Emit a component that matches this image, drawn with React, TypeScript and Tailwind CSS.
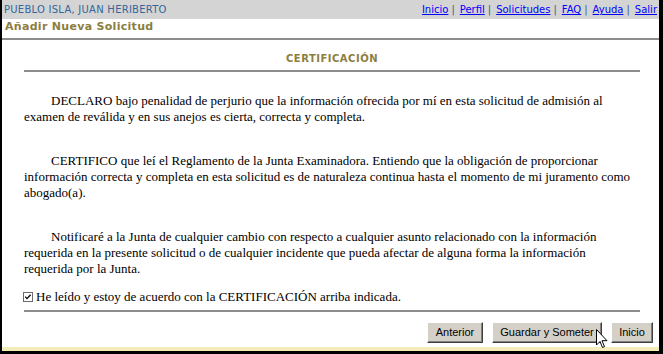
import React from "react";

const verdana = { fontFamily: '"DejaVu Sans", Verdana, sans-serif' };
const times = { fontFamily: '"Liberation Serif", "Times New Roman", serif' };
const arial = { fontFamily: '"Liberation Sans", Arial, sans-serif' };

function Sep() {
  return <span className="text-[#3a5a8a] ml-[3px]">|</span>;
}

function Btn({ children, w }: { children: React.ReactNode; w: string }) {
  return (
    <button
      className={`${w} h-[21px] bg-[#d4d0c8] border border-t-white border-l-white border-r-[#404040] border-b-[#404040] shadow-[inset_-1px_-1px_#808080] text-[11px] text-black leading-none flex items-center justify-center`}
      style={arial}
    >
      {children}
    </button>
  );
}

export default function App() {
  return (
    <div className="w-[663px] h-[354px] relative flex flex-col bg-white border-l-2 border-r-4 border-b-[3px] border-black overflow-hidden">
      {/* header bar */}
      <div
        className="h-[19px] bg-[#d4d4d4] flex items-center justify-between pl-[2px] pr-[2px] text-[10px]"
        style={verdana}
      >
        <span className="text-[#336699] tracking-[0.25px]">PUEBLO ISLA, JUAN HERIBERTO</span>
        <span className="flex items-center text-[#0000ff]">
          <a className="underline">Inicio</a>
          <Sep />
          <a className="underline ml-[5px]">Perfil</a>
          <Sep />
          <a className="underline ml-[5px]">Solicitudes</a>
          <Sep />
          <a className="underline ml-[5px]">FAQ</a>
          <Sep />
          <a className="underline ml-[5px]">Ayuda</a>
          <Sep />
          <a className="underline ml-[5px]">Salir</a>
        </span>
      </div>
      {/* title */}
      <div
        className="h-[16px] pl-[3px] flex items-center text-[11px] font-bold text-[#8c7e40] tracking-[0.3px]"
        style={verdana}
      >
        Añadir Nueva Solicitud
      </div>
      <div className="mt-[3px] h-[2px] bg-[#8c8c8c]" />

      {/* content */}
      <div className="pl-[22px] pr-[19px] flex flex-col">
        <div
          className="mt-[11px] h-[14px] flex items-center justify-center text-[10px] font-bold text-[#8c7e40] tracking-[0.5px]"
          style={verdana}
        >
          CERTIFICACIÓN
        </div>
        <div className="mt-[5px] h-[2px] bg-[#8c8c8c]" />

        <div className="text-[13px] leading-[16px] text-black" style={times}>
          <p className="mt-[21px] whitespace-nowrap indent-[27px]">
            DECLARO bajo penalidad de perjurio que la información ofrecida por mí en esta solicitud de admisión al
            <br />
            examen de reválida y en sus anejos es cierta, correcta y completa.
          </p>
          <p className="mt-[28px] whitespace-nowrap indent-[27px]">
            CERTIFICO que leí el Reglamento de la Junta Examinadora. Entiendo que la obligación de proporcionar
            <br />
            información correcta y completa en esta solicitud es de naturaleza continua hasta el momento de mi juramento como
            <br />
            abogado(a).
          </p>
          <p className="mt-[28px] whitespace-nowrap indent-[27px]">
            Notificaré a la Junta de cualquier cambio con respecto a cualquier asunto relacionado con la información
            <br />
            requerida en la presente solicitud o de cualquier incidente que pueda afectar de alguna forma la información
            <br />
            requerida por la Junta.
          </p>
          <div className="mt-[12px] h-[16px] flex items-center whitespace-nowrap">
            <svg width="10" height="10" viewBox="0 0 10 10" className="-ml-[1px] mr-[3px] shrink-0">
              <rect x="0.5" y="0.5" width="9" height="9" fill="#fff" stroke="#6b6b6b" />
              <path d="M2.2 4.6 L4 6.6 L7.6 2.8" fill="none" stroke="#000" strokeWidth="1.3" />
            </svg>
            <span>He leído y estoy de acuerdo con la CERTIFICACIÓN arriba indicada.</span>
          </div>
        </div>
        <div className="mt-[5px] h-[2px] bg-[#8c8c8c]" />
        <div className="mt-[10px] flex justify-end gap-[9px] -mr-[13px]">
          <Btn w="w-[56px]">Anterior</Btn>
          <Btn w="w-[110px]">Guardar y Someter</Btn>
          <Btn w="w-[42px]">Inicio</Btn>
        </div>
      </div>
      <div className="flex-1" />
      <div className="h-[4px] bg-[#f2ecb8]" />

      {/* mouse cursor */}
      <svg
        width="12"
        height="20"
        viewBox="0 0 12 20"
        className="absolute left-[594px] top-[329px]"
      >
        <path
          d="M0.5 0.5 L0.5 16 L4 12.5 L6.5 18.5 L8.5 17.6 L6 11.7 L11 11.7 Z"
          fill="#fff"
          stroke="#000"
          strokeWidth="1"
        />
      </svg>
    </div>
  );
}
